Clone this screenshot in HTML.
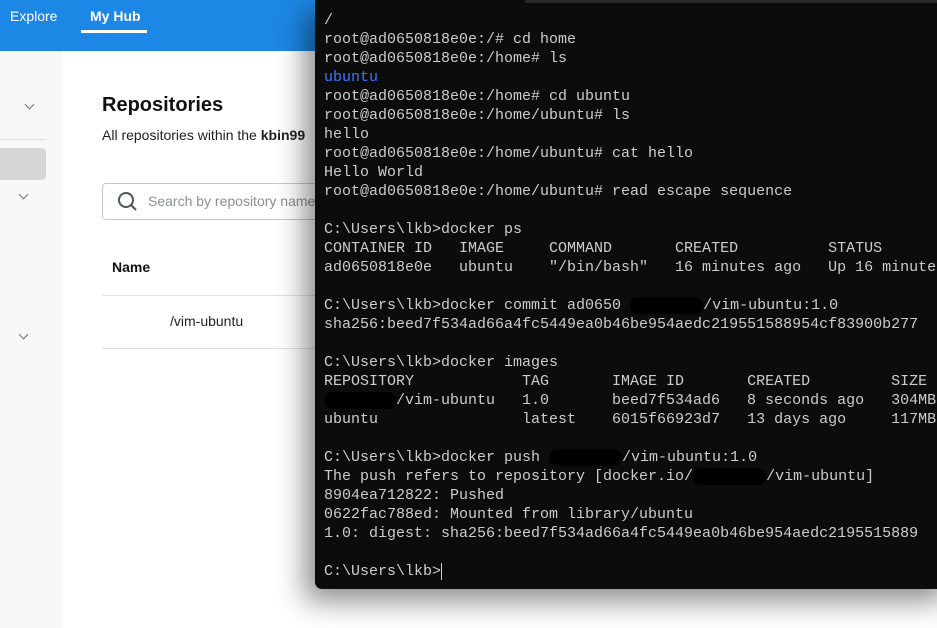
<!DOCTYPE html>
<html><head><meta charset="utf-8"><style>
*{margin:0;padding:0;box-sizing:border-box}
body{width:937px;height:628px;overflow:hidden;background:#fff;position:relative;font-family:"Liberation Sans",sans-serif}
.hdr{position:absolute;left:0;top:0;width:937px;height:51px;background:#1d87e5}
.nav{position:absolute;top:8px;color:#fff;font-size:14px}
.side{position:absolute;left:0;top:51px;width:62px;height:577px;background:#f8f8f8}
.chev{position:absolute;width:7px;height:7px;border-right:1.5px solid #6b7280;border-bottom:1.5px solid #6b7280;transform:rotate(45deg)}
.term{position:absolute;left:315px;top:0;width:640px;height:589px;background:#0c0c0c;border-radius:0 0 0 7px;box-shadow:-10px 12px 28px rgba(0,0,0,.45)}
.tl{position:absolute;left:9px;top:11px;font-family:"Liberation Mono","DejaVu Sans Mono",monospace;font-size:15px;line-height:19px;color:#cccccc;white-space:pre}
.b{background:#000;border-radius:9px;display:inline-block;height:17px;width:73px;vertical-align:middle}
</style></head><body>
<div class="hdr"></div>
<div class="nav" style="left:10px">Explore</div>
<div class="nav" style="left:90px;font-weight:bold">My Hub</div>
<div style="position:absolute;left:81px;top:30px;width:66px;height:3px;background:#fff"></div>
<div class="side"></div>
<div style="position:absolute;left:0;top:139px;width:46px;height:1px;background:#e0e0e0"></div>
<div style="position:absolute;left:0;top:148px;width:46px;height:32px;background:#d6d6d6;border-radius:0 4px 4px 0"></div>
<div class="chev" style="left:26px;top:101px"></div>
<div class="chev" style="left:20px;top:191px"></div>
<div class="chev" style="left:20px;top:331px"></div>
<div style="position:absolute;left:102px;top:94px;font-size:20px;font-weight:bold;color:#111">Repositories</div>
<div style="position:absolute;left:102px;top:127px;font-size:14px;color:#222;white-space:nowrap">All repositories within the <b>kbin99</b></div>
<div style="position:absolute;left:102px;top:183px;width:240px;height:37px;border:1px solid #c4c8cc;border-radius:4px"></div>
<svg style="position:absolute;left:117px;top:191px" width="22" height="22" viewBox="0 0 22 22"><circle cx="9" cy="9" r="7" fill="none" stroke="#4b5563" stroke-width="2"/><path d="M14 14l5 5" stroke="#4b5563" stroke-width="2"/></svg>
<div style="position:absolute;left:148px;top:193px;font-size:14px;color:#8a8f95;white-space:nowrap">Search by repository name</div>
<div style="position:absolute;left:112px;top:259px;font-size:14px;font-weight:bold;color:#111">Name</div>
<div style="position:absolute;left:102px;top:295px;width:220px;height:1px;background:#e0e0e0"></div>
<div style="position:absolute;left:170px;top:313px;font-size:14px;color:#222">/vim-ubuntu</div>
<div style="position:absolute;left:102px;top:348px;width:220px;height:1px;background:#e0e0e0"></div>
<div class="term"><div style="position:absolute;left:210px;top:0;width:430px;height:3px;background:#2a2a2a"></div>
<div class="tl">/
root@ad0650818e0e:/# cd home
root@ad0650818e0e:/home# ls
<span style="color:#3b78ff">ubuntu</span>
root@ad0650818e0e:/home# cd ubuntu
root@ad0650818e0e:/home/ubuntu# ls
hello
root@ad0650818e0e:/home/ubuntu# cat hello
Hello World
root@ad0650818e0e:/home/ubuntu# read escape sequence

C:\Users\lkb>docker ps
CONTAINER ID   IMAGE     COMMAND       CREATED          STATUS
ad0650818e0e   ubuntu    "/bin/bash"   16 minutes ago   Up 16 minutes

C:\Users\lkb>docker commit ad0650 <span class="b"></span>/vim-ubuntu:1.0
sha256:beed7f534ad66a4fc5449ea0b46be954aedc219551588954cf83900b277

C:\Users\lkb>docker images
REPOSITORY            TAG       IMAGE ID       CREATED         SIZE
<span class="b" style="width:72px"></span>/vim-ubuntu   1.0       beed7f534ad6   8 seconds ago   304MB
ubuntu                latest    6015f66923d7   13 days ago     117MB

C:\Users\lkb>docker push <span class="b"></span>/vim-ubuntu:1.0
The push refers to repository [docker.io/<span class="b"></span>/vim-ubuntu]
8904ea712822: Pushed
0622fac788ed: Mounted from library/ubuntu
1.0: digest: sha256:beed7f534ad66a4fc5449ea0b46be954aedc2195515889

C:\Users\lkb><span style="border-left:1px solid #ccc"></span></div></div>
</body></html>
